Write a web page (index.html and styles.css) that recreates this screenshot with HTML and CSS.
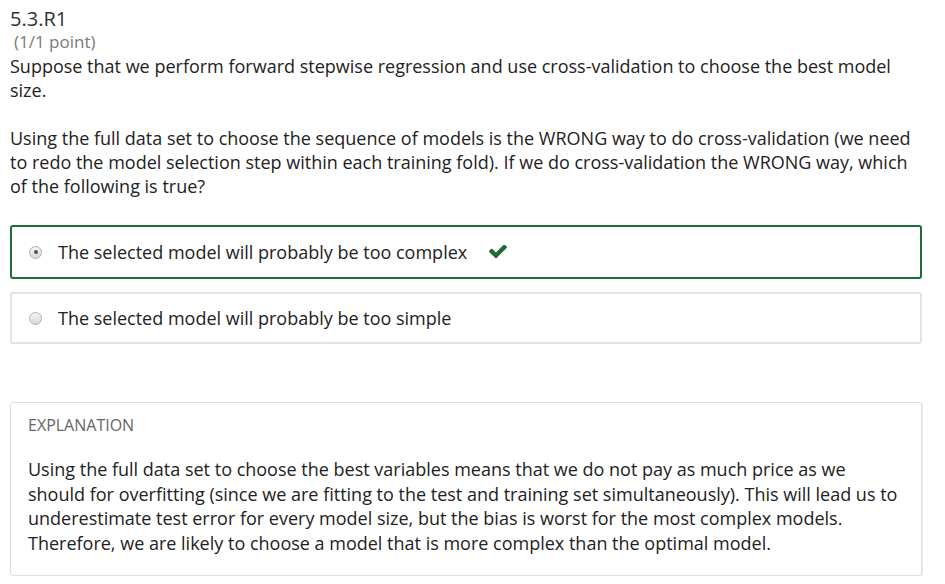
FILE: index.html
```html
<!DOCTYPE html>
<html>
<head>
<meta charset="utf-8">
<link rel="stylesheet" href="styles.css">
</head>
<body>
<div class="problem">
  <h3 class="title">5.3.R1</h3>
  <div class="points">(1/1 point)</div>
  <p class="q">Suppose that we perform forward stepwise regression and use cross-validation to choose the best model size.</p>
  <p class="q q2">Using the full data set to choose the sequence of models is the WRONG way to do cross-validation (we need to redo the model selection step within each training fold). If we do cross-validation the WRONG way, which of the following is true?</p>
  <div class="choices">
    <label class="choice correct">
      <span class="radio checked"></span>
      <span class="ctext">The selected model will probably be too complex</span>
      <svg class="check" width="18" height="14" viewBox="115 400 1560 1160"><path fill="#1f6e3a" d="M1671 566q0 40-28 68l-724 724-136 136q-28 28-68 28t-68-28l-136-136-362-362q-28-28-28-68t28-68l136-136q28-28 68-28t68 28l294 295 656-657q28-28 68-28t68 28l136 136q28 28 28 68z"/></svg>
    </label>
    <label class="choice">
      <span class="radio"></span>
      <span class="ctext">The selected model will probably be too simple</span>
    </label>
  </div>
  <div class="explanation">
    <div class="exp-label">EXPLANATION</div>
    <p class="exp-text">Using the full data set to choose the best variables means that we do not pay as much price as we should for overfitting (since we are fitting to the test and training set simultaneously). This will lead us to underestimate test error for every model size, but the bias is worst for the most complex models. Therefore, we are likely to choose a model that is more complex than the optimal model.</p>
  </div>
</div>
</body>
</html>
```
FILE: styles.css
```css
html, body {
  margin: 0;
  padding: 0;
  background: #fff;
}
body {
  font-family: "Open Sans", "Liberation Sans", sans-serif;
  color: #313131;
}
.problem {
  width: 912px;
  padding: 6px 0 0 10px;
}
.title {
  margin: 0;
  font-size: 20px;
  font-weight: 400;
  line-height: 26px;
  color: #313131;
}
.points {
  font-size: 17px;
  color: #7a7a7a;
  line-height: 20px;
  padding-left: 4px;
  margin-top: 0;
}
.q {
  margin: 2px 0 0;
  font-size: 18px;
  line-height: 24px;
  color: #222;
}
.q2 {
  margin-top: 24px;
}
.choices {
  margin-top: 27px;
  display: flex;
  flex-direction: column;
  gap: 13px;
}
.choice {
  display: flex;
  align-items: center;
  box-sizing: border-box;
  height: 52px;
  border: 2px solid #e3e3e3;
  border-radius: 3px;
  padding-left: 17px;
  font-size: 18px;
  color: #222;
}
.choice.correct {
  height: 54px;
  border-color: #1c6e38;
}
.radio {
  width: 13px;
  height: 13px;
  border-radius: 50%;
  border: 1px solid #b0b0b0;
  background: linear-gradient(#f6f6f6, #d8d8d8);
  box-sizing: border-box;
  margin-right: 16px;
  position: relative;
  flex: none;
}
.radio.checked::after {
  content: "";
  position: absolute;
  left: 3.5px;
  top: 3.5px;
  width: 4px;
  height: 4px;
  border-radius: 50%;
  background: #555;
}
.check {
  margin-left: 22px;
}
.explanation {
  margin-top: 58px;
  border: 1px solid #ddd;
  box-shadow: 1px 1px 1px rgba(0,0,0,0.08);
  border-radius: 3px;
  padding: 11px 20px 20px 17px;
}
.exp-label {
  font-size: 16px;
  color: #666;
  line-height: 22px;
}
.exp-text {
  margin: 21px 0 0;
  font-size: 18px;
  line-height: 24.5px;
  color: #222;
}
```
